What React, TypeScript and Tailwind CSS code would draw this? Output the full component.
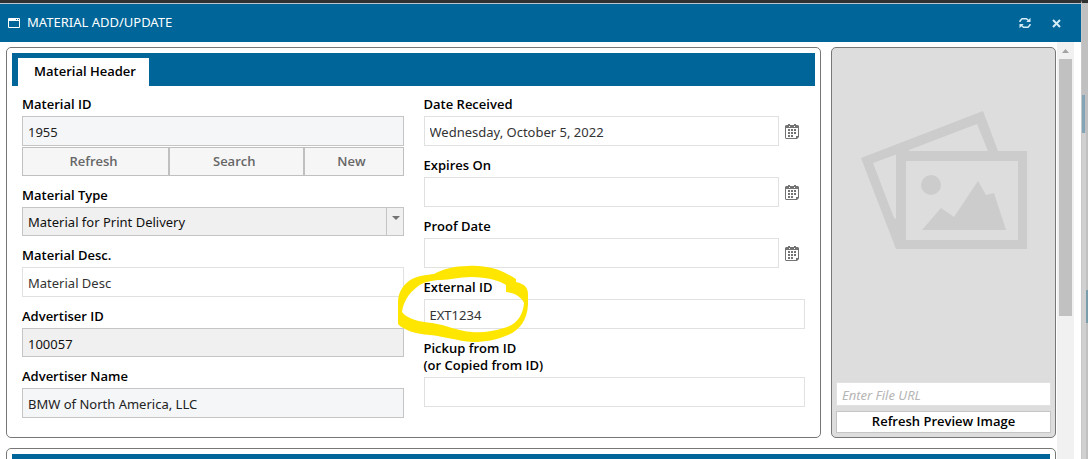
import { useId, useState } from "react";
import type { ReactNode } from "react";

const FIELD = "block w-full min-w-0 border px-[5px] pt-[2px] text-[13px] outline-none";

const TONES = {
  plain: "h-[30px] border-[#e1e1e1] bg-white text-[#333]",
  locked: "h-[30px] border-[#c5c5c5] bg-[#f4f6f8] text-[#222]",
  filled: "h-[29px] border-[#c5c5c5] bg-[#f0f0f0] text-[#111]",
};

const BOLD = "font-['Open_Sans',sans-serif] font-semibold";

interface FieldProps {
  label: ReactNode;
  value?: string;
  tone?: keyof typeof TONES;
  readOnly?: boolean;
}

function WindowIcon() {
  return (
    <svg width="12" height="10" viewBox="0 0 12 10" fill="none" aria-hidden="true">
      <path d="M.5 .5h11v9H.5z" stroke="white" />
      <path d="M1 1h10v2H1z" fill="white" />
      <path d="M8 1h1v1H8zM10 1h1v1h-1z" fill="#006699" />
    </svg>
  );
}

function SyncIcon() {
  return (
    <svg width="12" height="12" viewBox="0 0 12 12" fill="none" aria-hidden="true">
      <path d="M1 5V4l2-2.200h4.500L10 4M11 7v1l-2 2.200H4.500L2 8" stroke="#d3ecf8" strokeWidth="1.500" />
      <path d="M11.500 .8V5H7.300zM.5 11.200V7h4.200z" fill="#d3ecf8" />
    </svg>
  );
}

function CloseIcon() {
  return (
    <svg width="9" height="9" viewBox="0 0 9 9" fill="none" aria-hidden="true">
      <path d="M1 1l7 7M8 1L1 8" stroke="#d3ecf8" strokeWidth="2" />
    </svg>
  );
}

function CalendarIcon() {
  return (
    <svg width="14" height="15" viewBox="0 0 14 15" fill="none" aria-hidden="true">
      <path d="M3 0h2v1h4V0h2v1h2l1 1v11l-2 2H1l-1-1V2l1-1h2z" fill="#737373" />
      <path d="M1 4h12v8h-2v2H1z" fill="white" />
      <path d="M4 2h1v1H4zM9 2h1v1H9z" fill="white" />
      <path
        d="M3 5h2v2H3zM6 5h2v2H6zM9 5h2v2H9zM3 8h2v2H3zM6 8h2v2H6zM9 8h2v2H9zM3 11h2v2H3zM6 11h2v2H6z"
        fill="#737373"
      />
    </svg>
  );
}

function Label({ htmlFor, children }: { htmlFor: string; children: ReactNode }) {
  return (
    <label htmlFor={htmlFor} className={`mb-[3px] block text-[13px] leading-[17px] text-black ${BOLD}`}>
      {children}
    </label>
  );
}

function TextField({ label, value = "", tone = "plain", readOnly }: FieldProps) {
  const id = useId();
  return (
    <div>
      <Label htmlFor={id}>{label}</Label>
      <input id={id} type="text" defaultValue={value} readOnly={readOnly} className={`${FIELD} ${TONES[tone]}`} />
    </div>
  );
}

function DateField({ label, value = "" }: { label: string; value?: string }) {
  const id = useId();
  return (
    <div>
      <Label htmlFor={id}>{label}</Label>
      <div className="flex items-center gap-[6px]">
        <input id={id} type="text" defaultValue={value} className={`${FIELD} ${TONES.plain}`} />
        <button type="button" aria-label={`Pick ${label}`} className="w-5 shrink-0">
          <CalendarIcon />
        </button>
      </div>
    </div>
  );
}

// Two stacked photo frames shown when a material has no preview
function PicturePlaceholder() {
  return (
    <svg viewBox="0 0 166 139" className="w-[166px]" fill="#cccccc" aria-hidden="true">
      <path
        fillRule="evenodd"
        d="M0 47L122 0L137 40H166V138H35zM12 52L35 43.500V108L33 107zM48 39L116 13L127 40H48zM45 50V129H157V50z"
      />
      <circle cx="70" cy="74" r="10" />
      <path d="M61 119L80 97L93 106L117 70L125 84L133 82L145 119z" />
    </svg>
  );
}

function HighlightMark() {
  return (
    <svg
      viewBox="0 0 132 78"
      className="pointer-events-none absolute -top-[14px] -left-[26px] z-10 w-[132px]"
      fill="#ffe600"
      aria-hidden="true"
    >
      <path
        fillRule="evenodd"
        d="M0 37C0 28 5 19 14 14C22 10 29 10 36 9C45 4 56 1 70 1C90 0 104 5 118 14V17C127 19 130 23 130 29V40C129 55 122 65 110 70C98 75 87 77 75 77C59 76 45 71 32 70C18 69 5 65 0 59ZM4 47C5 38 10 29 19 22C25 17 34 15 43 15C52 15 61 12 73 12C90 12 102 16 108 20V27C118 28 124 33 126 38C125 51 118 60 106 63C96 66 85 68 74 67C60 66 48 60 34 58C22 57 9 54 4 47Z"
      />
    </svg>
  );
}

export default function App() {
  const [fileUrl, setFileUrl] = useState("");
  const idField = useId();
  const typeField = useId();

  return (
    <div className="flex h-screen overflow-hidden bg-white font-['Noto_Sans','Open_Sans',sans-serif] text-[13px] text-black">
      <div className="flex min-w-0 flex-1 flex-col border-t-[3px] border-[#303030]">
        <header className="flex h-[39px] shrink-0 items-center border-t border-[#b8c8d0] bg-[#006699] pr-5 pl-2 text-white">
          <WindowIcon />
          <h1 className="ml-[7px] flex-1 text-[13px]">MATERIAL ADD/UPDATE</h1>
          <button type="button" aria-label="Reload" className="mr-[21px]">
            <SyncIcon />
          </button>
          <button type="button" aria-label="Close">
            <CloseIcon />
          </button>
        </header>

        <div className="flex min-h-0 flex-1 pr-[7px]">
          <main className="min-w-0 flex-1 overflow-hidden pt-[5px] pr-px pl-[6px]">
            <div className="flex gap-[10px]">
              <section className="min-w-0 flex-1 rounded-[5px] border border-[#777] p-[5px] pb-[19px]">
                <div role="tablist" className="flex h-[33px] items-end bg-[#006699] pl-[6px]">
                  <button type="button" role="tab" aria-selected="true" className={`h-7 bg-white pr-[13px] pl-4 ${BOLD}`}>
                    Material Header
                  </button>
                </div>

                <div className="grid grid-cols-2 gap-5 px-[10px] pt-[10px]">
                  <div className="flex flex-col gap-[11px]">
                    <div>
                      <Label htmlFor={idField}>Material ID</Label>
                      <input id={idField} type="text" defaultValue="1955" className={`${FIELD} ${TONES.locked}`} />
                      <div className={`mt-px flex h-[29px] text-[#666] ${BOLD}`}>
                        <button type="button" className="w-[147px] border border-[#c0c0c0] bg-[#f6f6f6] pt-px pr-1">Refresh</button>
                        <button type="button" className="flex-1 border border-[#c0c0c0] bg-[#f6f6f6] pt-px pr-1">Search</button>
                        <button type="button" className="w-[100px] border border-[#c0c0c0] bg-[#f6f6f6] pt-px pr-1">New</button>
                      </div>
                    </div>

                    <div>
                      <Label htmlFor={typeField}>Material Type</Label>
                      <div className="relative">
                        <select id={typeField} className={`${FIELD} ${TONES.filled} appearance-none`}>
                          <option>Material for Print Delivery</option>
                        </select>
                        <span className="pointer-events-none absolute inset-y-0 right-0 w-[18px] border-l border-[#c5c5c5]">
                          <svg width="8" height="4" viewBox="0 0 8 4" className="mt-[9px] ml-[5px]" fill="#737373" aria-hidden="true">
                            <path d="M0 0h8L4 4z" />
                          </svg>
                        </span>
                      </div>
                    </div>

                    <TextField label="Material Desc." value="Material Desc" />
                    <TextField label="Advertiser ID" value="100057" tone="filled" />
                    <TextField label="Advertiser Name" value="BMW of North America, LLC" tone="locked" readOnly />
                  </div>

                  <div className="flex flex-col gap-[11px]">
                    <DateField label="Date Received" value="Wednesday, October 5, 2022" />
                    <DateField label="Expires On" />
                    <DateField label="Proof Date" />
                    <div className="relative">
                      <TextField label="External ID" value="EXT1234" />
                      <HighlightMark />
                    </div>
                    <TextField label={<>Pickup from ID<br />(or Copied from ID)</>} />
                  </div>
                </div>
              </section>

              <aside className="flex w-[225px] shrink-0 flex-col rounded-[5px] border border-[#777] bg-[#dddddd] p-1">
                <div className="flex flex-1 items-start justify-center pt-[59px]">
                  <PicturePlaceholder />
                </div>
                <input
                  type="text"
                  aria-label="File URL"
                  placeholder="Enter File URL"
                  value={fileUrl}
                  onChange={(e) => setFileUrl(e.target.value)}
                  className="h-6 w-full border border-[#e1e1e1] bg-white px-[5px] pt-[2px] italic outline-none placeholder:text-[#b5b5b5]"
                />
                <button type="button" className={`mt-[5px] h-[22px] border border-[#c5c5c5] bg-white ${BOLD}`}>
                  Refresh Preview Image
                </button>
              </aside>
            </div>

            <section className="mt-[10px] rounded-[5px] border border-[#777] p-[5px]">
              <div className="h-[33px] bg-[#006699]" />
            </section>
          </main>

          {/* Scrollbar */}
          <div className="flex w-[17px] shrink-0 flex-col items-center bg-[#f1f1f1]">
            <svg width="7" height="4" viewBox="0 0 7 4" className="mt-[7px] mb-[6px]" fill="#a3a3a3" aria-hidden="true">
              <path d="M3.500 0L7 4H0z" />
            </svg>
            <div className="h-[257px] w-[13px] bg-[#c1c1c1]" />
          </div>
        </div>
      </div>

      {/* Sliver of the page behind the window */}
      <div className="flex w-[7px] shrink-0 border-t-[3px] border-l border-t-[#303030] border-l-[#c8c8c8] bg-[#c0c0c0]">
        <div className="w-1 pt-[92px]">
          <div className="h-[38px] w-[3px] bg-[#84a5b8]" />
          <div className="h-full bg-[#d0d0d0]" />
        </div>
        <div className="w-[2px] pt-[287px]">
          <div className="h-[33px] bg-[#7a9cab]" />
        </div>
      </div>
    </div>
  );
}
